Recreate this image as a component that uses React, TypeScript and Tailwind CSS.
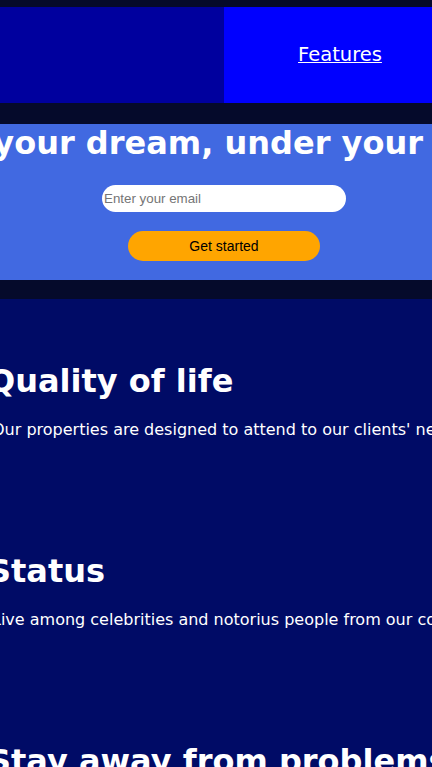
import React from "react";

const sections = [
  {
    title: "Quality of life",
    text: "Our properties are designed to attend to our clients' needs and give them the best experience.",
  },
  {
    title: "Status",
    text: "Live among celebrities and notorius people from our community.",
  },
  {
    title: "Stay away from problems",
    text: "Our security team keeps your home safe at every hour of the day.",
  },
];

const App = () => {
  return (
    <div className="w-[432px] h-[767px] overflow-hidden bg-[#050a2b] font-['DejaVu_Sans',sans-serif]">
      <div className="w-[448px]">
        <nav className="mt-[7px] h-[96px] flex">
          <div className="w-[224px] bg-[#00009e]" />
          <div className="flex-1 bg-[#0000ff] flex items-center justify-center pl-[8px]">
            <a href="#" className="text-white text-[19.5px] underline">
              Features
            </a>
          </div>
        </nav>

        <section className="mt-[21px] h-[156px] bg-[#4169e1] flex flex-col items-center pt-[1px]">
          <div className="w-full flex justify-center">
            <h1 className="shrink-0 whitespace-nowrap text-white text-[32px] font-bold leading-[37px] ml-[4px]">
              Build your dream, under your control
            </h1>
          </div>
          <input
            type="email"
            placeholder="Enter your email"
            className="mt-[23px] w-[244px] h-[27px] rounded-full bg-white px-[2px] text-[13.33px] font-['Liberation_Sans',sans-serif] text-black placeholder:text-[#757575] outline-none"
          />
          <button className="mt-[19px] w-[192px] h-[30px] rounded-full bg-[#ffa500] text-black text-[14px] font-medium font-['Liberation_Sans',sans-serif]">
            Get started
          </button>
        </section>

        <main className="mt-[19px] bg-[#000b66] text-white">
          {sections.map((s) => (
            <div key={s.title} className="pt-[64px] pb-[50px] whitespace-nowrap">
              <h2 className="ml-[-12px] text-[32px] font-bold leading-[37px]">{s.title}</h2>
              <p className="mt-[20px] ml-[-8px] text-[16px] leading-[19px]">{s.text}</p>
            </div>
          ))}
        </main>
      </div>
    </div>
  );
};

export default App;
